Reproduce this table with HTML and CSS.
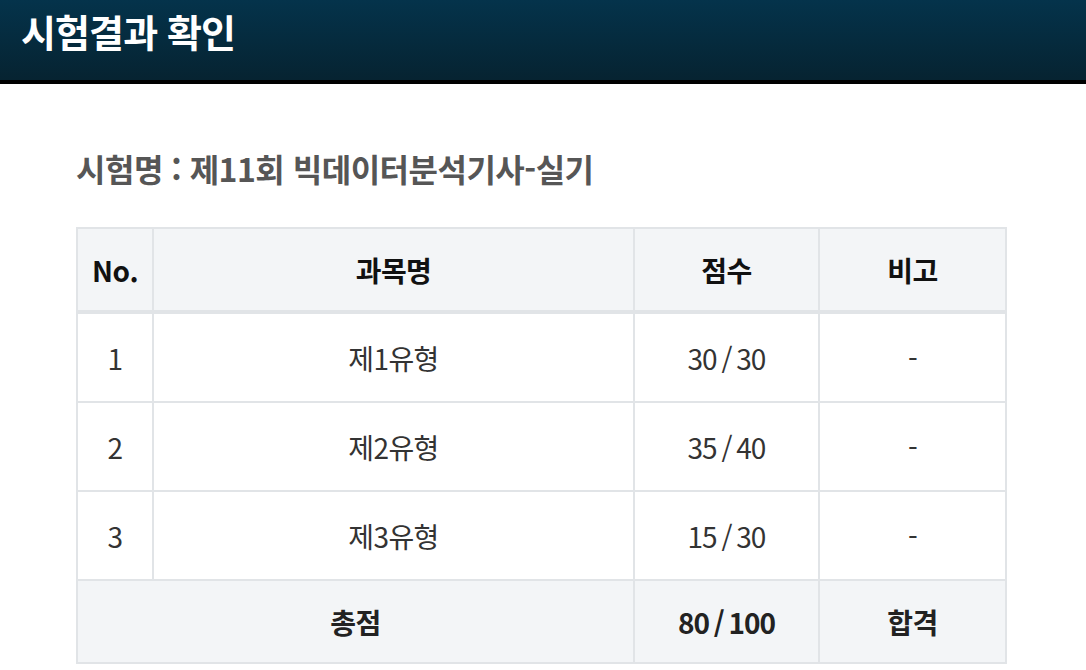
FILE: index.html
```html
<!DOCTYPE html>
<html lang="ko">
<head>
<meta charset="utf-8">
<title>시험결과 확인</title>
<link rel="stylesheet" href="styles.css">
</head>
<body>
<header class="topbar">
  <h1 class="topbar-title">시험결과 확인</h1>
</header>
<main class="content">
  <h2 class="exam-name">시험명 : 제11회 빅데이터분석기사-실기</h2>
  <table class="result-table">
    <colgroup>
      <col class="col-no">
      <col class="col-subject">
      <col class="col-score">
      <col class="col-note">
    </colgroup>
    <thead>
      <tr>
        <th>No.</th>
        <th>과목명</th>
        <th>점수</th>
        <th>비고</th>
      </tr>
    </thead>
    <tbody>
      <tr>
        <td>1</td>
        <td>제1유형</td>
        <td class="score">30 / 30</td>
        <td>-</td>
      </tr>
      <tr>
        <td>2</td>
        <td>제2유형</td>
        <td class="score">35 / 40</td>
        <td>-</td>
      </tr>
      <tr>
        <td>3</td>
        <td>제3유형</td>
        <td class="score">15 / 30</td>
        <td>-</td>
      </tr>
    </tbody>
    <tfoot>
      <tr>
        <th colspan="2">총점</th>
        <th class="score">80 / 100</th>
        <th>합격</th>
      </tr>
    </tfoot>
  </table>
</main>
</body>
</html>
```

FILE: styles.css
```css
html, body {
  margin: 0;
  padding: 0;
  background: #ffffff;
  font-family: "Noto Sans CJK KR", "Noto Sans", sans-serif;
}

.topbar {
  height: 80px;
  background: linear-gradient(to bottom, #04334b 0%, #062331 100%);
  border-bottom: 4px solid #000000;
  box-sizing: content-box;
  display: flex;
  align-items: flex-start;
  padding-left: 21px;
}

.topbar-title {
  margin: 0;
  padding-top: 5px;
  color: #ffffff;
  font-size: 38px;
  font-weight: 700;
  letter-spacing: -0.9px;
  line-height: 52px;
}

.content {
  padding: 59px 0 0 76px;
}

.exam-name {
  margin: 0 0 34px 0;
  color: #565656;
  font-size: 32px;
  font-weight: 700;
  letter-spacing: -0.5px;
  line-height: 50px;
}

.result-table {
  width: 929px;
  border-collapse: collapse;
  table-layout: fixed;
  border: 2px solid #e1e4e7;
}

.col-no { width: 76px; }
.col-subject { width: 481px; }
.col-score { width: 185px; }
.col-note { width: 187px; }

.result-table th,
.result-table td {
  border: 2px solid #e1e4e7;
  text-align: center;
  font-size: 28px;
  letter-spacing: -0.6px;
  padding: 0;
}

.result-table .score {
  letter-spacing: -1px;
  word-spacing: -2px;
}

.result-table thead th {
  height: 81px;
  background: #f3f5f7;
  color: #111111;
  font-weight: 700;
  border-bottom: 4px solid #e1e4e7;
}

.result-table tbody td {
  height: 87px;
  color: #333333;
  font-weight: 400;
}

.result-table tfoot th {
  height: 81px;
  background: #f3f5f7;
  color: #222222;
  font-weight: 700;
}
```
